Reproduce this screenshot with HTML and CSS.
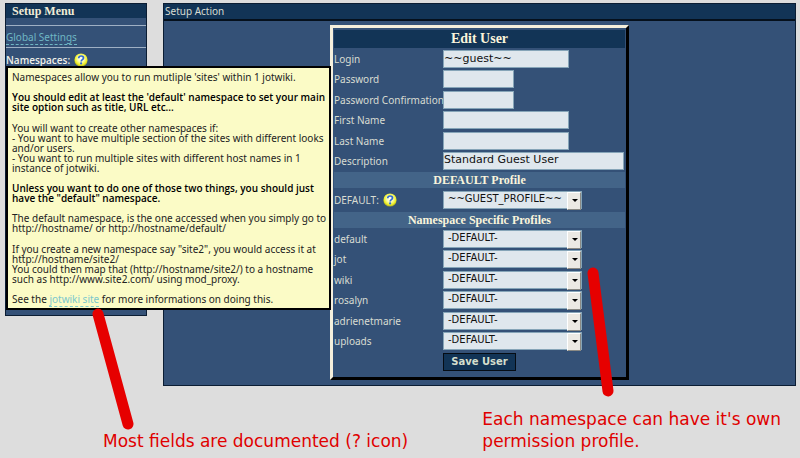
FILE: index.html
```html
<!DOCTYPE html>
<html lang="en">
<head>
<meta charset="utf-8">
<title>Setup</title>
<link rel="stylesheet" href="styles.css">
</head>
<body>
<svg width="0" height="0" class="defs" aria-hidden="true">
  <defs>
    <radialGradient id="ball" cx="50%" cy="42%" r="58%">
      <stop offset="0" stop-color="#ffffff"/>
      <stop offset=".4" stop-color="#fbfcb0"/>
      <stop offset=".75" stop-color="#eef02a"/>
      <stop offset="1" stop-color="#a9a81c"/>
    </radialGradient>
    <symbol id="help" viewBox="0 0 14 14">
      <circle cx="7" cy="7" r="6.6" fill="url(#ball)"/>
      <path d="M4.7 5.2C4.8 3.6 5.8 3 7.1 3c1.4 0 2.4.8 2.4 2 0 1.700-2.300 1.700-2.300 3.500" fill="none" stroke="#2f69d8" stroke-width="1.700"/>
      <circle cx="7.100" cy="10.400" r="1.100" fill="#2f69d8"/>
    </symbol>
  </defs>
</svg>
<div class="page">
  <nav class="menu">
    <h2 class="menu-title">Setup Menu</h2>
    <div class="menu-item"><a href="#global">Global Settings</a></div>
    <div class="menu-label">Namespaces: <svg class="help"><use href="#help"/></svg></div>
    <div class="tip" role="tooltip">
      <p>Namespaces allow you to run mutliple 'sites' within 1 jotwiki.</p>
      <p><b>You should edit at least the 'default' namespace to set your main<br>site option such as title, URL etc...</b></p>
      <p>You will want to create other namespaces if:<br>- You want to have multiple section of the sites with different looks<br>and/or users.<br>- You want to run multiple sites with different host names in 1<br>instance of jotwiki.</p>
      <p><b>Unless you want to do one of those two things, you should just<br>have the "default" namespace.</b></p>
      <p>The default namespace, is the one accessed when you simply go to<br>http://hostname/ or http://hostname/default/</p>
      <p>If you create a new namespace say "site2", you would access it at<br>http://hostname/site2/<br>You could then map that (http://hostname/site2/) to a hostname<br>such as http://www.site2.com/ using mod_proxy.</p>
      <p>See the <a href="#site">jotwiki site</a> for more informations on doing this.</p>
    </div>
  </nav>
  <main class="action">
    <div class="action-title">Setup Action</div>
    <form class="editor">
      <h1>Edit User</h1>
      <div class="rows">
        <div class="row"><label for="login">Login</label><input id="login" class="mid" value="~~guest~~"></div>
        <div class="row"><label for="pw">Password</label><input id="pw" class="short" type="password"></div>
        <div class="row"><label for="pw2">Password Confirmation</label><input id="pw2" class="short" type="password"></div>
        <div class="row"><label for="first">First Name</label><input id="first" class="mid"></div>
        <div class="row"><label for="last">Last Name</label><input id="last" class="mid"></div>
        <div class="row"><label for="desc">Description</label><input id="desc" class="long" value="Standard Guest User"></div>
      </div>
      <h3>DEFAULT Profile</h3>
      <div class="row single"><label for="prof">DEFAULT: <svg class="help"><use href="#help"/></svg></label><span class="pick"><select id="prof"><option>~~GUEST_PROFILE~~</option></select></span></div>
      <h3>Namespace Specific Profiles</h3>
      <div class="rows">
        <div class="row"><label for="n1">default</label><span class="pick"><select id="n1"><option>-DEFAULT-</option></select></span></div>
        <div class="row"><label for="n2">jot</label><span class="pick"><select id="n2"><option>-DEFAULT-</option></select></span></div>
        <div class="row"><label for="n3">wiki</label><span class="pick"><select id="n3"><option>-DEFAULT-</option></select></span></div>
        <div class="row"><label for="n4">rosalyn</label><span class="pick"><select id="n4"><option>-DEFAULT-</option></select></span></div>
        <div class="row"><label for="n5">adrienetmarie</label><span class="pick"><select id="n5"><option>-DEFAULT-</option></select></span></div>
        <div class="row"><label for="n6">uploads</label><span class="pick"><select id="n6"><option>-DEFAULT-</option></select></span></div>
      </div>
      <button type="button">Save User</button>
    </form>
  </main>
</div>
<div class="notes">
  <p class="note-left">Most fields are documented (? icon)</p>
  <p class="note-right">Each namespace can have it's own<br>permission profile.</p>
</div>
<svg class="strokes" width="800" height="458" aria-hidden="true">
  <path d="M98 314L128 424M593 273L608 391" stroke="#e60000" stroke-width="11" stroke-linecap="round"/>
</svg>
</body>
</html>
```
FILE: styles.css
```css
* { box-sizing: border-box; }
body {
  margin: 0;
  background: #dddddd;
  font: 10px/10px "Noto Sans", sans-serif;
  color: #d8dcd2;
  position: relative;
}
h1, h2, h3, p { margin: 0; }
.defs { position: absolute; }
.page {
  display: flex;
  align-items: flex-start;
  gap: 16px;
  padding: 3px 4px 0 5px;
}
.menu {
  position: relative;
  flex: 0 0 142px;
  min-height: 313px;
  background: #345177;
  border: 1px solid #0b1d33;
}
.menu-title {
  background: #123456;
  color: #f0ecd6;
  font: bold 12px/14px "Liberation Serif", serif;
  padding-left: 6px;
  margin-bottom: 7px;
}
.menu-item {
  border: solid #9fb0c4;
  border-width: 1px 0;
  height: 23px;
  padding-top: 4px;
  line-height: 14px;
}
.menu-item a {
  color: #6fb7c4;
  text-decoration: none;
  border-bottom: 1px dashed #6fb7c4;
}
.menu-label {
  display: flex;
  align-items: center;
  gap: 4px;
  padding-top: 4px;
  font-family: "Open Sans", "Noto Sans", sans-serif;
  font-weight: 600;
  line-height: 16px;
  color: #f0f0e8;
}
.help { width: 14px; height: 14px; flex: none; }
.tip {
  position: absolute;
  z-index: 2;
  left: 0;
  top: 62px;
  width: 325px;
  height: 244px;
  padding: 4px;
  display: flex;
  flex-direction: column;
  justify-content: space-between;
  background: #fbfbc6;
  border: 2px solid #000;
  color: #222;
  white-space: nowrap;
}
.tip b { color: #000; font-family: "Open Sans", "Noto Sans", sans-serif; font-weight: 600; }
.tip a { color: #7cc8cc; text-decoration: none; border-bottom: 1px dashed #7cc8cc; }
.action {
  flex: 1;
  background: #345177;
  border: 1px solid #0b1d33;
  padding-bottom: 5px;
}
.action-title {
  background: #123456;
  border-bottom: 2px solid #05101c;
  line-height: 15px;
  padding-left: 1px;
  margin-bottom: 4px;
}
.editor {
  width: 299px;
  margin: 0 auto;
  padding: 2px 1px 6px;
  border: 3px solid;
  border-color: #f5efdc #000 #000 #f5efdc;
}
h1 {
  background: #123456;
  color: #faf5dc;
  text-align: center;
  font: bold 14px/18px "Liberation Serif", serif;
  margin-bottom: 2px;
}
h3 {
  background: #436488;
  color: #faf5dc;
  text-align: center;
  font: bold 12px/16px "Liberation Serif", serif;
}
.rows {
  display: flex;
  flex-direction: column;
  justify-content: space-between;
  min-height: 120px;
  margin: 2px 0;
}
.row { display: flex; align-items: center; height: 18px; }
.single { margin: 3px 0; }
label { flex: 0 0 109px; width: 109px; display: flex; align-items: center; gap: 4px; white-space: nowrap; line-height: 18px; }
input, select {
  height: 18px;
  border: 1px solid #86a5b8;
  border-radius: 0;
  background: #dfe7ed;
  color: #111;
  font: 11px/14px "DejaVu Sans", sans-serif;
  padding: 0 0 2px;
}
.short { width: 71px; }
.mid { width: 126px; }
.long { width: 181px; }
.pick { position: relative; width: 139px; height: 18px; }
select { appearance: none; width: 100%; padding-left: 4px; display: block; font-size: 10px; }
.pick::before {
  content: "";
  position: absolute;
  right: 1px;
  top: 1px;
  width: 12px;
  height: 16px;
  background: #ebe9e4;
  border: 1px solid;
  border-color: #fff #8b8a84 #8b8a84 #fff;
  pointer-events: none;
}
.pick::after {
  content: "";
  position: absolute;
  right: 4px;
  top: 8px;
  border: solid transparent;
  border-width: 3px 3px 0;
  border-top-color: #000;
  pointer-events: none;
}
button {
  display: block;
  width: 73px;
  height: 18px;
  margin: 3px 0 0 109px;
  padding: 0;
  background: #123456;
  border: 1px solid #050c14;
  color: #d5dfcd;
  font: bold 10px/14px "DejaVu Sans", sans-serif;
}
.notes {
  display: flex;
  justify-content: space-between;
  padding: 22px 19px 0 103px;
  color: #e00000;
  font: 17px/22px "DejaVu Sans", sans-serif;
  white-space: nowrap;
}
.note-left { padding-top: 22px; }
.strokes { position: absolute; left: 0; top: 0; pointer-events: none; z-index: 3; }
```
